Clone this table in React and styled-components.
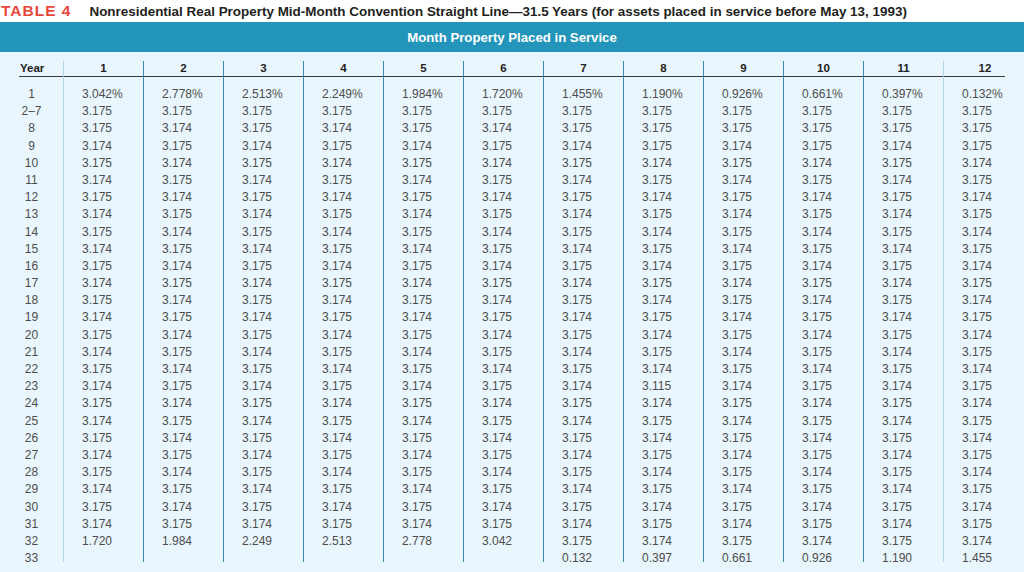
import React from 'react'
import styled, { createGlobalStyle } from 'styled-components'

const GlobalStyle = createGlobalStyle`
  html, body {
    margin: 0;
    padding: 0;
    background: #ffffff;
  }
  body {
    font-family: "Liberation Sans", Arial, sans-serif;
  }
`

const Page = styled.div`
  width: 1024px;
  height: 572px;
  overflow: hidden;
  display: flex;
  flex-direction: column;
`

const TitleBar = styled.div`
  height: 22px;
  display: flex;
  align-items: center;
  padding-left: 1px;
  gap: 18px;
`

const TableNo = styled.span`
  color: #e5483a;
  font-size: 15.5px;
  font-weight: bold;
  letter-spacing: 1px;
`

const Caption = styled.span`
  color: #231f20;
  font-size: 13.45px;
  font-weight: bold;
`

const Banner = styled.div`
  height: 30px;
  background: #2395bb;
  color: #ffffff;
  font-size: 13.2px;
  font-weight: bold;
  display: flex;
  align-items: center;
  justify-content: center;
`

const Panel = styled.div`
  flex: 1;
  background: #e9f6fd;
  padding-top: 9px;
`

const Columns = styled.div`
  display: flex;
  height: 501px;
`

const Column = styled.div`
  box-sizing: border-box;
  width: ${p => p.$w}px;
  flex: none;
  display: flex;
  flex-direction: column;
  border-left: ${p => p.$tone === 'none' ? '0' : '1px solid'};
  border-color: ${p => p.$tone === 'light' ? '#b4d6e7' : '#3f87a4'};
`

const HeadCell = styled.div`
  height: 17px;
  line-height: 15px;
  border-bottom: 1px solid #3a3a3a;
  font-size: 11.5px;
  font-weight: bold;
  color: #222222;
  text-align: ${p => p.$align || 'center'};
  margin-left: ${p => p.$ml || 0}px;
  margin-right: ${p => p.$mr || 0}px;
  padding-left: ${p => p.$pl || 0}px;
`

const Values = styled.div`
  padding-top: 9px;
  display: flex;
  flex-direction: column;
`

const Cell = styled.div`
  height: 17.2px;
  line-height: 17.2px;
  font-size: 12px;
  color: #4d4d4d;
  white-space: nowrap;
  text-align: ${p => p.$center ? 'center' : 'left'};
  padding-left: ${p => p.$center ? 0 : 18}px;
`

const firstYear = ['3.042%', '2.778%', '2.513%', '2.249%', '1.984%', '1.720%', '1.455%', '1.190%', '0.926%', '0.661%', '0.397%', '0.132%']
const lastFirstHalf = ['1.720', '1.984', '2.249', '2.513', '2.778', '3.042']
const year33 = ['0.132', '0.397', '0.661', '0.926', '1.190', '1.455']

const years = ['1', '2–7']
for (let y = 8; y <= 33; y++) years.push(String(y))

function monthValues(m) {
  const out = [firstYear[m - 1], '3.175']
  for (let y = 8; y <= 33; y++) {
    if (y === 8) out.push(m >= 7 || m % 2 === 1 ? '3.175' : '3.174')
    else if (y === 32 && m <= 6) out.push(lastFirstHalf[m - 1])
    else if (y === 33) out.push(m <= 6 ? '' : year33[m - 7])
    else if (y === 23 && m === 8) out.push('3.115')
    else out.push((y + m) % 2 === 0 ? '3.174' : '3.175')
  }
  return out
}

const months = Array.from({ length: 12 }, (_, i) => i + 1)

export default function App() {
  return (
    <Page>
      <GlobalStyle />
      <TitleBar>
        <TableNo>TABLE 4</TableNo>
        <Caption>Nonresidential Real Property Mid-Month Convention Straight Line—31.5 Years (for assets placed in service before May 13, 1993)</Caption>
      </TitleBar>
      <Banner>Month Property Placed in Service</Banner>
      <Panel>
        <Columns>
          <Column $w={63} $tone="none">
            <HeadCell $align="left" $ml={19} $pl={1}>Year</HeadCell>
            <Values>
              {years.map(y => <Cell key={y} $center>{y}</Cell>)}
            </Values>
          </Column>
          {months.map(m => (
            <Column key={m} $w={80} $tone={m === 1 || m === 12 ? 'light' : 'dark'}>
              {m === 12
                ? <HeadCell $mr={18} $pl={21}>{m}</HeadCell>
                : <HeadCell>{m}</HeadCell>}
              <Values>
                {monthValues(m).map((v, i) => <Cell key={i}>{v || '\u00a0'}</Cell>)}
              </Values>
            </Column>
          ))}
        </Columns>
      </Panel>
    </Page>
  )
}
